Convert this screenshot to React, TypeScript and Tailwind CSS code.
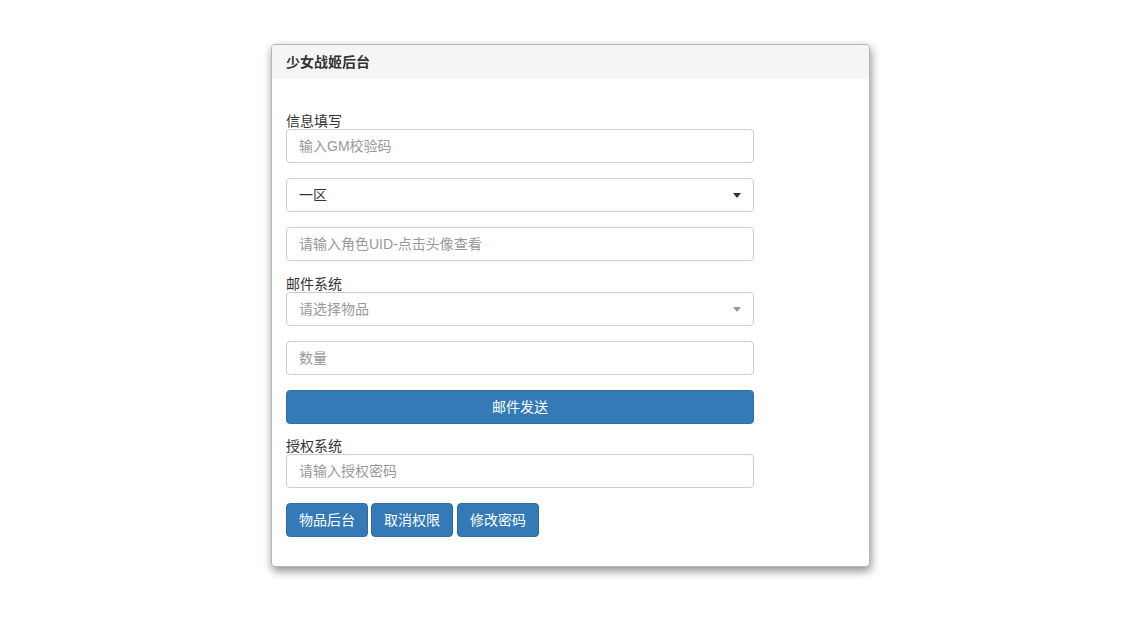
import React from 'react';

const font = { fontFamily: '"Liberation Sans", "Noto Sans CJK SC", sans-serif' };

function TextInput({ placeholder }: { placeholder: string }) {
  return (
    <input
      placeholder={placeholder}
      className="block w-[468px] h-[34px] px-3 text-[14px] text-[#555] border border-[#ccc] rounded-[4px] bg-white placeholder:text-[#999] outline-none"
      style={font}
    />
  );
}

function SelectBox({ value, muted }: { value: string; muted?: boolean }) {
  return (
    <div className="flex items-center justify-between w-[468px] h-[34px] pl-3 pr-[12px] border border-[#ccc] rounded-[4px] bg-white">
      <span className={muted ? 'text-[14px] text-[#999]' : 'text-[14px] text-[#333]'}>{value}</span>
      <span
        className={
          muted
            ? 'w-0 h-0 border-l-[4px] border-r-[4px] border-t-[5px] border-l-transparent border-r-transparent border-t-[#999]'
            : 'w-0 h-0 border-l-[4px] border-r-[4px] border-t-[5px] border-l-transparent border-r-transparent border-t-[#333]'
        }
      />
    </div>
  );
}

function Label({ children }: { children: React.ReactNode }) {
  return <div className="text-[14px] leading-[16px] text-[#333]">{children}</div>;
}

function Btn({ children, wide, className = '' }: { children: React.ReactNode; wide?: boolean; className?: string }) {
  return (
    <button
      className={
        (wide
          ? 'block w-[468px] h-[34px] text-[14px] text-white bg-[#337ab7] border border-[#2e6da4] rounded-[4px] '
          : 'h-[34px] px-3 text-[14px] text-white bg-[#337ab7] border border-[#2e6da4] rounded-[4px] ') + className
      }
    >
      {children}
    </button>
  );
}

export default function App() {
  return (
    <div className="min-h-screen bg-white pt-[44px] pl-[271px]" style={font}>
      <div className="w-[599px] bg-white border border-[#b5b5b5] rounded-[4px] shadow-[1px_4px_10px_rgba(0,0,0,0.45)] overflow-hidden">
        <div className="h-[34px] flex items-center px-[14px] bg-[#f5f5f5] text-[14px] font-bold text-[#333]">
          少女战姬后台
        </div>
        <div className="pl-[14px] pt-[34px] pb-[29px] flex flex-col">
          <Label>信息填写</Label>
          <TextInput placeholder="输入GM校验码" />
          <div className="h-[15px]" />
          <SelectBox value="一区" />
          <div className="h-[15px]" />
          <TextInput placeholder="请输入角色UID-点击头像查看" />
          <div className="h-[15px]" />
          <Label>邮件系统</Label>
          <SelectBox value="请选择物品" muted />
          <div className="h-[15px]" />
          <TextInput placeholder="数量" />
          <div className="h-[15px]" />
          <Btn wide>邮件发送</Btn>
          <div className="h-[14px]" />
          <Label>授权系统</Label>
          <TextInput placeholder="请输入授权密码" />
          <div className="h-[15px]" />
          <div className="flex">
            <Btn>物品后台</Btn>
            <Btn className="ml-[3px]">取消权限</Btn>
            <Btn className="ml-[4px]">修改密码</Btn>
          </div>
        </div>
      </div>
    </div>
  );
}
